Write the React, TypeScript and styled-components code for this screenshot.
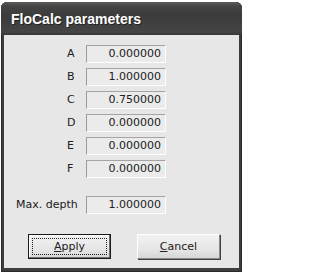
import React from "react";
import styled, { createGlobalStyle } from "styled-components";

const Global = createGlobalStyle`
  html, body { margin: 0; padding: 0; background: #ffffff; }
  body { width: 246px; height: 276px; overflow: hidden; }
`;

const Page = styled.div`
  padding: 2px 4px 0 1px;
  width: 246px;
  box-sizing: border-box;
`;

const Window = styled.div`
  width: 241px;
  display: flex;
  flex-direction: column;
  background: #3e3e3e;
  border-radius: 6px 6px 0 0;
  padding: 0 3px 4px 3px;
  box-sizing: border-box;
  box-shadow: inset 0 0 0 1px #2a2a2a;
`;

const TitleBar = styled.div`
  height: 33px;
  display: flex;
  align-items: center;
  padding: 1px 0 0 7px;
  box-sizing: border-box;
  background: linear-gradient(#5c5c5c 0px, #444444 4px, #3b3b3b 14px, #454545 30px, #363636 33px);
  margin: 0 -3px;
  padding-left: 10px;
  border-radius: 6px 6px 0 0;
  font-family: "Liberation Sans", Arial, sans-serif;
  font-weight: bold;
  font-size: 14px;
  color: #ffffff;
  text-shadow: 1px 1px 0 #222222;
`;

const Body = styled.div`
  background: #e7e7e7;
  padding: 10px 0 9px 12px;
  display: flex;
  flex-direction: column;
  font-family: "DejaVu Sans", Tahoma, sans-serif;
  font-size: 11px;
  color: #202020;
`;

const Fields = styled.div`
  display: grid;
  grid-template-columns: 70px 80px;
  row-gap: 5px;
  margin-bottom: 18px;
`;

const Label = styled.div<{ $indent: number }>`
  height: 18px;
  line-height: 18px;
  padding-left: ${(p) => p.$indent}px;
`;

const Value = styled.div`
  height: 18px;
  box-sizing: border-box;
  border-top: 1px solid #a4a4a4;
  border-left: 1px solid #9a9a9a;
  border-right: 1px solid #ffffff;
  border-bottom: 1px solid #ffffff;
  background: #ebebeb;
  text-align: right;
  padding-right: 4px;
  line-height: 16px;
`;

const MaxRow = styled.div`
  display: grid;
  grid-template-columns: 70px 80px;
  margin-bottom: 20px;
`;

const Buttons = styled.div`
  display: flex;
  gap: 26px;
  padding-left: 12px;
`;

const Button = styled.div<{ $default?: boolean }>`
  width: 83px;
  height: 25px;
  box-sizing: border-box;
  display: flex;
  align-items: center;
  justify-content: center;
  background: linear-gradient(#f2f2f2, #e4e4e4 70%, #d6d6d6);
  border: 1px solid ${(p) => (p.$default ? "#1a1a1a" : "#8a8a8a")};
  border-top-color: ${(p) => (p.$default ? "#1a1a1a" : "#ffffff")};
  border-left-color: ${(p) => (p.$default ? "#1a1a1a" : "#ffffff")};
  box-shadow: ${(p) =>
    p.$default ? "inset -1px -1px 0 #707070, inset 1px 1px 0 #ffffff" : "1px 1px 0 #404040"};
  position: relative;
`;

const Focus = styled.div`
  position: absolute;
  inset: 3px;
  border: 1px dotted #202020;
`;

const Mnemonic = styled.span`
  text-decoration: underline;
`;

const rows: [string, string][] = [
  ["A", "0.000000"],
  ["B", "1.000000"],
  ["C", "0.750000"],
  ["D", "0.000000"],
  ["E", "0.000000"],
  ["F", "0.000000"],
];

export default function App() {
  return (
    <>
      <Global />
      <Page>
        <Window>
          <TitleBar>FloCalc parameters</TitleBar>
          <Body>
            <Fields>
              {rows.map(([l, v]) => (
                <React.Fragment key={l}>
                  <Label $indent={51}>{l}</Label>
                  <Value>{v}</Value>
                </React.Fragment>
              ))}
            </Fields>
            <MaxRow>
              <Label $indent={0}>Max. depth</Label>
              <Value>1.000000</Value>
            </MaxRow>
            <Buttons>
              <Button $default>
                <Focus />
                <span>
                  <Mnemonic>A</Mnemonic>pply
                </span>
              </Button>
              <Button>
                <span>
                  <Mnemonic>C</Mnemonic>ancel
                </span>
              </Button>
            </Buttons>
          </Body>
        </Window>
      </Page>
    </>
  );
}
